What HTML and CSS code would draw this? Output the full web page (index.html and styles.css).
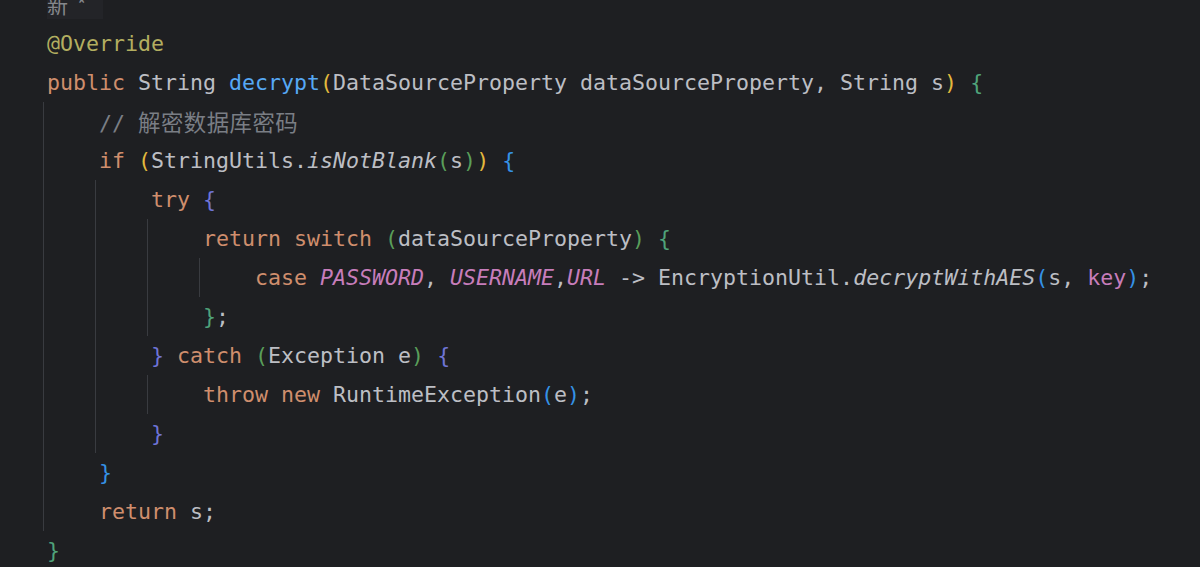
FILE: index.html
```html
<!DOCTYPE html>
<html lang="zh">
<head>
<meta charset="utf-8">
<title>decrypt</title>
<link rel="stylesheet" href="styles.css">
</head>
<body>
<div class="editor">
  <div class="code">
    <div class="line"><span class="inlay">新 *</span></div>
    <div class="line"><span class="ann">@Override</span></div>
    <div class="line"><span class="kw">public</span> String <span class="fn">decrypt</span><span class="b-y">(</span>DataSourceProperty dataSourceProperty, String s<span class="b-y">)</span> <span class="b-g">{</span></div>
    <div class="block">
      <div class="line"><span class="cm">// <span class="cjk">解密数据库密码</span></span></div>
      <div class="line"><span class="kw">if</span> <span class="b-y">(</span>StringUtils.<span class="it">isNotBlank</span><span class="b-g2">(</span>s<span class="b-g2">)</span><span class="b-y">)</span> <span class="b-b">{</span></div>
      <div class="block">
        <div class="line"><span class="kw">try</span> <span class="b-p">{</span></div>
        <div class="block">
          <div class="line"><span class="kw">return switch</span> <span class="b-g2">(</span>dataSourceProperty<span class="b-g2">)</span> <span class="b-g">{</span></div>
          <div class="block">
            <div class="line"><span class="kw">case</span> <span class="cst">PASSWORD</span>, <span class="cst">USERNAME</span>,<span class="cst">URL</span> -&gt; EncryptionUtil.<span class="it">decryptWithAES</span><span class="b-b">(</span>s, <span class="fld">key</span><span class="b-b">)</span>;</div>
          </div>
          <div class="line"><span class="b-g">}</span>;</div>
        </div>
        <div class="line"><span class="b-p">}</span> <span class="kw">catch</span> <span class="b-g2">(</span>Exception e<span class="b-g2">)</span> <span class="b-p">{</span></div>
        <div class="block">
          <div class="line"><span class="kw">throw new</span> RuntimeException<span class="b-b">(</span>e<span class="b-b">)</span>;</div>
        </div>
        <div class="line"><span class="b-p">}</span></div>
      </div>
      <div class="line"><span class="b-b">}</span></div>
      <div class="line"><span class="kw">return</span> s;</div>
    </div>
    <div class="line"><span class="b-g">}</span></div>
  </div>
</div>
</body>
</html>
```

FILE: styles.css
```css
html, body {
  margin: 0;
  padding: 0;
  background: #1e1f22;
  overflow: hidden;
}

.editor {
  width: 1200px;
  height: 567px;
  overflow: hidden;
  background: #1e1f22;
}

.code {
  margin-top: -15px;
  padding-left: 43px;
  font-family: "DejaVu Sans Mono", "Noto Sans CJK SC", monospace;
  font-size: 21.6px;
  color: #bcbec4;
}

.line {
  height: 39px;
  line-height: 39px;
  padding-left: 4px;
  white-space: pre;
}

.block {
  border-left: 1px solid #393b40;
  padding-left: 51px;
}

.inlay {
  font-family: "Noto Sans CJK SC", "DejaVu Sans", sans-serif;
  font-size: 21px;
  color: #85878c;
  background: #232428;
  padding-right: 14px;
  letter-spacing: 2px;
}

.kw { color: #cf8e6d; }
.ann { color: #b3ae60; }
.fn { color: #56a8f5; }
.cm { color: #7a7e85; }
.cjk {
  font-family: "Noto Sans CJK SC", sans-serif;
  font-size: 22.4px;
  letter-spacing: 0.5px;
}
.it { font-style: italic; }
.cst { color: #c77dbb; font-style: italic; }
.fld { color: #c77dbb; }

.b-y { color: #e2b93d; }
.b-g { color: #4fa37a; }
.b-g2 { color: #5a9e5a; }
.b-b { color: #3592e6; }
.b-p { color: #6f74d6; }
```
